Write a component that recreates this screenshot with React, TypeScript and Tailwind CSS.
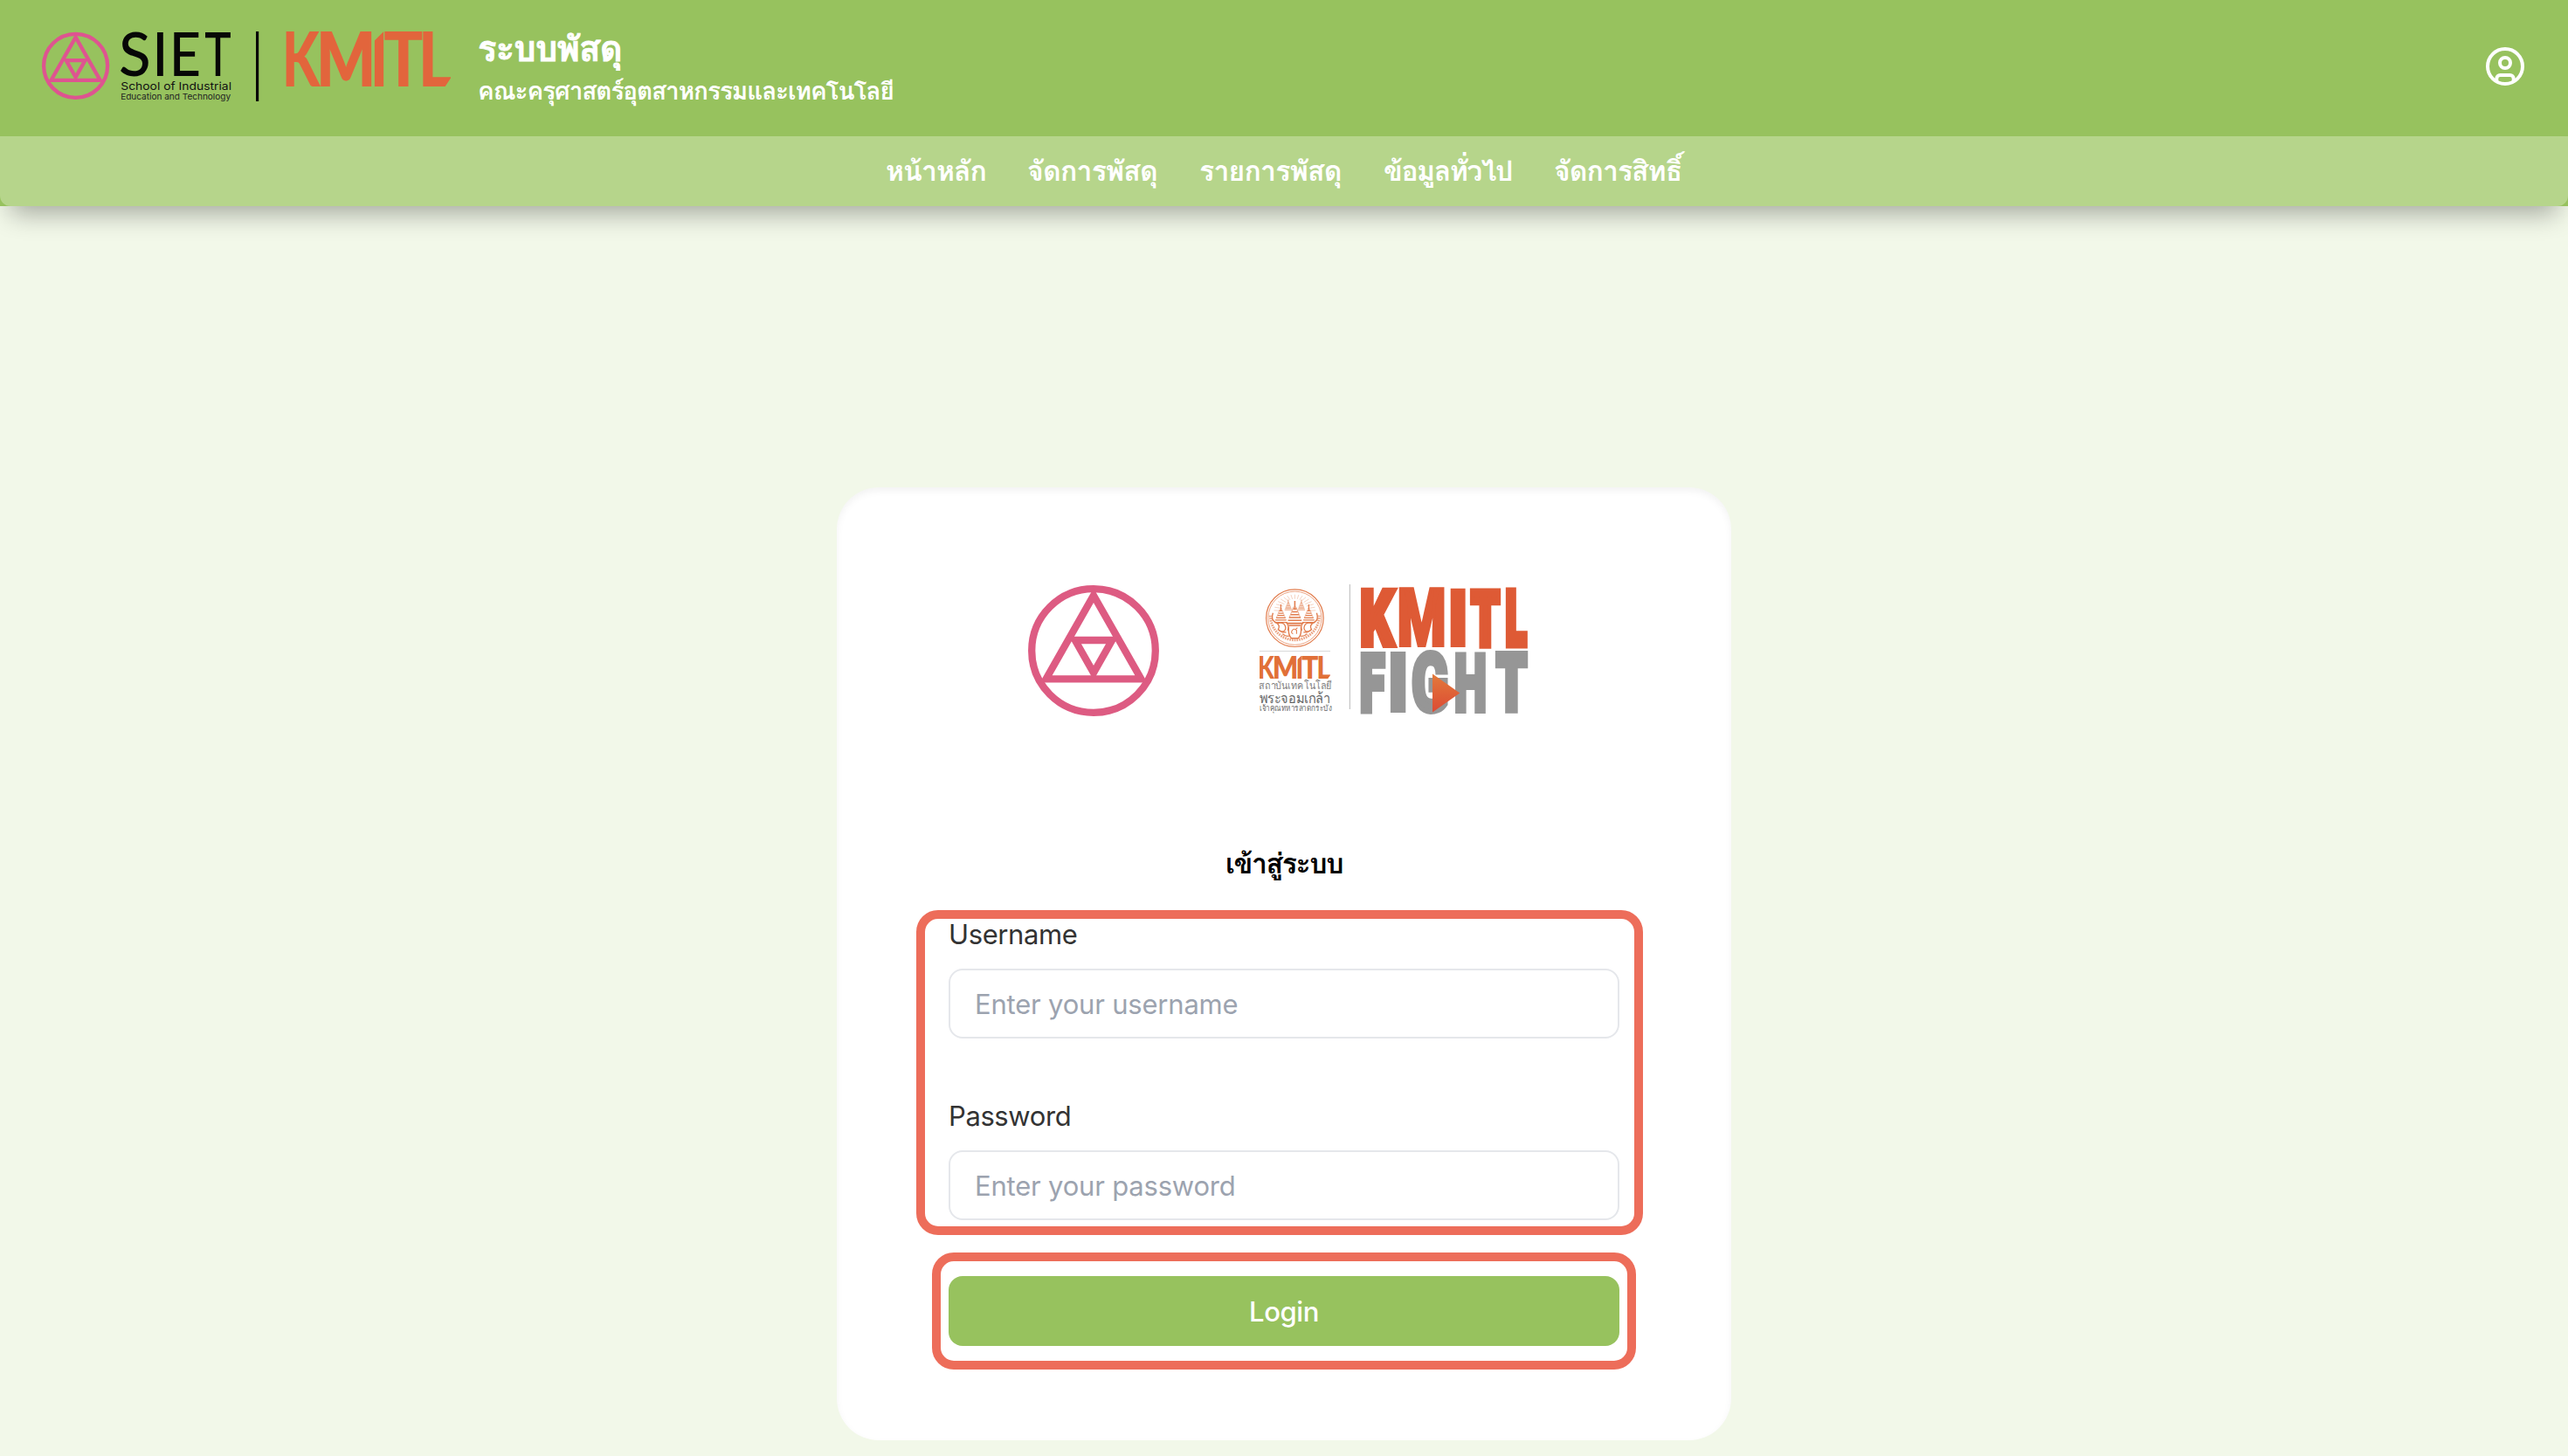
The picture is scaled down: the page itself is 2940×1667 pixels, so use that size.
import { useMemo } from "react";

type FitProps = {
  text: string;
  x: number;
  y: number;
  w: number;
  h: number;
  fill: string;
  family?: string;
  weight?: number;
  grow?: number;
};

/* Sets a run of text so that its ink fills the given box. */
function Fit({ text, x, y, w, h, fill, family = "Lato", weight = 400, grow = 0 }: FitProps) {
  const m = useMemo(() => {
    const ctx = document.createElement("canvas").getContext("2d")!;
    ctx.font = `${weight} 200px ${family}, sans-serif`;
    const t = ctx.measureText(text);
    return {
      l: t.actualBoundingBoxLeft / 2,
      r: t.actualBoundingBoxRight / 2,
      a: t.actualBoundingBoxAscent / 2,
      d: t.actualBoundingBoxDescent / 2,
    };
  }, [text, family, weight]);
  const sx = (w - grow) / (m.l + m.r);
  const sy = (h - grow) / (m.a + m.d);
  return (
    <text
      transform={`translate(${x + grow / 2 + m.l * sx} ${y + grow / 2 + m.a * sy}) scale(${sx} ${sy})`}
      fontFamily={`${family}, sans-serif`}
      fontSize={100}
      fontWeight={weight}
      fill={fill}
      stroke={grow ? fill : "none"}
      strokeWidth={grow}
      vectorEffect="non-scaling-stroke"
    >
      {text}
    </text>
  );
}

function Triangles({ color }: { color: string }) {
  return (
    <g fill="none" stroke={color} strokeWidth={8.3} strokeMiterlimit={10}>
      <circle r={70.8} />
      <path d="M0 -63.3 54.4 32.3H-54.4Z" />
      <path d="M-21.2 -12H21.2L0 25.3Z" />
    </g>
  );
}

function KmitlMark({ id, color }: { id: string; color: string }) {
  return (
    <g clipPath={`url(#${id})`}>
      <clipPath id={id}>
        <path d="M0 0H100V12L112 0H189V53L182 63.5H0Z" />
      </clipPath>
      <Fit text="K" x={0} y={0} w={40} h={63.3} weight={900} fill={color} />
      <Fit text="M" x={40} y={0} w={58} h={63.3} weight={800} fill={color} />
      <Fit text="I" x={101.5} y={0} w={10.5} h={63.3} weight={900} fill={color} />
      <Fit text="T" x={113} y={0} w={43} h={63.3} weight={900} fill={color} />
      <Fit text="L" x={157} y={0} w={32} h={63.3} weight={900} fill={color} />
    </g>
  );
}

function SietLogo() {
  return (
    <svg width={469} height={80} viewBox="48 36 469 80" className="block overflow-visible">
      <g transform="translate(86.6 75.3) scale(0.516)">
        <Triangles color="#de5490" />
      </g>
      <Fit text="S" x={138} y={36} w={32} h={51.5} weight={500} fill="#070707" />
      <Fit text="I" x={179.6} y={36.8} w={7.4} h={49.8} weight={500} fill="#070707" />
      <Fit text="E" x={199} y={36.8} w={28.3} h={49.8} weight={500} fill="#070707" />
      <Fit text="T" x={235} y={36.8} w={29} h={49.8} weight={500} fill="#070707" />
      <Fit text="School of Industrial" x={139} y={94} w={125} h={9.2} family="Inter" weight={400} fill="#111" />
      <Fit text="Education and Technology" x={139} y={107} w={125} h={9} family="Inter" weight={400} fill="#222" />
      <rect x={293} y={36} width={3.2} height={80} fill="#070707" />
      <g transform="translate(327.3 36)">
        <KmitlMark id="mark-header" color="#e2653c" />
      </g>
    </svg>
  );
}

function Pagoda({ x, y, s }: { x: number; y: number; s: number }) {
  return (
    <g transform={`translate(${x} ${y}) scale(${s})`}>
      <path d="M0 -12V-5M-1.5 -5H1.5M-2.5 -2.5H2.5M-3.5 0H3.5M-5 2.5H5M-6 5H6M-7 7.5H7" strokeWidth={1.2} />
      <path d="M-1 -7 -5 3M1 -7 5 3" strokeWidth={0.5} />
    </g>
  );
}

function Emblem() {
  const rays = Array.from({ length: 17 }, (_, i) => Math.PI + (Math.PI * (i + 0.5)) / 17);
  return (
    <g fill="none" stroke="#e27d4e">
      <circle r={32.8} strokeWidth={1.2} />
      <circle r={30.6} strokeWidth={0.7} />
      <path d="M-28 -3A28 28 0 1 0 28 -3" strokeWidth={3} strokeDasharray="1.7 1" strokeOpacity={0.7} />
      {rays.map((a) => (
        <path
          key={a}
          d={`M${Math.cos(a) * 15} ${Math.sin(a) * 15 - 7}L${Math.cos(a) * 24} ${Math.sin(a) * 20 - 7}`}
          strokeWidth={0.5}
          strokeOpacity={0.7}
        />
      ))}
      <Pagoda x={-16} y={-3} s={1.05} />
      <Pagoda x={16} y={-3} s={1.05} />
      <Pagoda x={0} y={-4} s={1.3} />
      <Pagoda x={-7.5} y={-14} s={0.6} />
      <Pagoda x={7.5} y={-14} s={0.6} />
      <path d="M-25 -6q-3 8 3 11t3 8q4 4 9 3M25 -6q3 8-3 11t-3 8q-4 4-9 3" strokeWidth={1.4} />
      <path d="M-20 6q7-2 9 3t-4 7M20 6q-7-2-9 3t4 7M-10 5q4 3 2 9M10 5q-4 3-2 9M-14 18q5 4 8 2M14 18q-5 4-8 2" strokeWidth={1.3} />
      <path d="M-8 6H8M-7 8.5H7M-7 10q-1 9 3 13H4q4-4 3-13" strokeWidth={1.4} />
      <path d="M-2 18q-3-1-1-4t5 0v4M3 11l-2 2" strokeWidth={1.1} />
    </g>
  );
}

function FightLogo() {
  const o = "#de5a35";
  const g = "#969696";
  const f = "Roboto";
  return (
    <svg width={310} height={150} viewBox="1441 668 310 150" className="block overflow-visible">
      <defs>
        <linearGradient id="play" x1="0" y1="0" x2="0" y2="1">
          <stop offset="0" stopColor="#e37a3a" />
          <stop offset="1" stopColor="#dc4a34" />
        </linearGradient>
      </defs>
      <g transform="translate(1482.4 707.7)">
        <Emblem />
      </g>
      <rect x={1442} y={745} width={81} height={1} fill="#d9d9d9" />
      <g transform="translate(1442 750.4) scale(0.43 0.42)">
        <KmitlMark id="mark-card" color="#e17038" />
      </g>
      <Fit text="สถาบันเทคโนโลยี" x={1442} y={778.5} w={81.5} h={11} fill="#808080" />
      <Fit text="พระจอมเกล้า" x={1442} y={791.5} w={81.5} h={13.5} weight={500} fill="#666" />
      <Fit text="เจ้าคุณทหารลาดกระบัง" x={1442.5} y={806.5} w={81} h={10.5} weight={500} fill="#6c6c6c" />
      <rect x={1544.8} y={669} width={1.2} height={143} fill="#c4c4c4" />
      <Fit text="K" x={1557.3} y={673} w={42} h={68} family={f} weight={900} fill={o} grow={5} />
      <Fit text="M" x={1601.3} y={673} w={52.8} h={68} family={f} weight={900} fill={o} grow={3.5} />
      <Fit text="I" x={1660.7} y={673} w={17.3} h={68} family={f} weight={900} fill={o} />
      <Fit text="T" x={1681.7} y={673} w={37.5} h={68} family={f} weight={900} fill={o} grow={7} />
      <Fit text="L" x={1722.5} y={673} w={27.7} h={68} family={f} weight={900} fill={o} grow={7} />
      <Fit text="F" x={1556.5} y={746} w={30.8} h={70} family={f} weight={900} fill={g} grow={6.5} />
      <Fit text="I" x={1591.8} y={746} w={17.8} h={70} family={f} weight={900} fill={g} />
      <Fit text="G" x={1616} y={744.5} w={42.3} h={72.5} family={f} weight={900} fill={g} grow={5} />
      <Fit text="H" x={1665} y={746} w={36.5} h={70} family={f} weight={900} fill={g} grow={5} />
      <Fit text="T" x={1710.7} y={746} w={39.5} h={70} family={f} weight={900} fill={g} grow={7} />
      <path d="M1640 771.5 1671.3 793.5 1640 815.5Z" fill="url(#play)" />
    </svg>
  );
}

function UserIcon() {
  return (
    <svg width={48} height={48} viewBox="0 0 48 48" fill="none" stroke="#fff" strokeWidth={4}>
      <circle cx={24} cy={24} r={20} />
      <circle cx={24} cy={20} r={6} />
      <path d="M14.3 41V38a4 4 0 0 1 4-4H29.7a4 4 0 0 1 4 4V41" />
    </svg>
  );
}

const NAV = [
  { label: "หน้าหลัก", box: "w-[114px] tracking-[-1px]" },
  { label: "จัดการพัสดุ", box: "w-[149px] tracking-[-0.8px]" },
  { label: "รายการพัสดุ", box: "w-[163px] tracking-[-0.8px]" },
  { label: "ข้อมูลทั่วไป", box: "w-[147px] tracking-[-1.5px]" },
  { label: "จัดการสิทธิ์", box: "w-[147px] tracking-[-1px]" },
];

function Field({ label, placeholder, type }: { label: string; placeholder: string; type: string }) {
  return (
    <div className="flex flex-col">
      <label className="mb-[17px] h-[44px] text-[31px] leading-[44px] tracking-[-0.4px] text-[#333]">{label}</label>
      <input
        type={type}
        placeholder={placeholder}
        className="h-20 w-full rounded-2xl border-2 border-[#e5e7eb] bg-white px-[28px] text-[31px] tracking-[-0.2px] placeholder:text-[#9ca3af]"
      />
    </div>
  );
}

export default function App() {
  return (
    <div className="flex h-[1667px] w-[2940px] flex-col overflow-hidden bg-[#f2f8e9] font-['Inter','Loma','Noto_Sans_Thai',sans-serif]">
      <header className="bg-[#97c25e] shadow-[0_20px_28px_-12px_rgba(0,0,0,0.33)]">
        <div className="flex h-[156px] items-start justify-between pl-12 pr-12">
          <div className="flex">
            <div className="pt-9">
              <SietLogo />
            </div>
            <div className="ml-[30px] flex flex-col pt-7 font-bold whitespace-nowrap text-white">
              <span className="h-14 text-[40px] leading-[56px] tracking-[-0.8px] [-webkit-text-stroke:0.8px_#fff]">ระบบพัสดุ</span>
              <span className="h-10 text-[28px] leading-[40px] tracking-[-1.1px]">คณะครุศาสตร์อุตสาหกรรมและเทคโนโลยี</span>
            </div>
          </div>
          <button className="mt-[52px]">
            <UserIcon />
          </button>
        </div>
        <nav className="flex h-20 items-center justify-center gap-12 rounded-b-xl bg-[#b6d58b] text-[32px] font-bold whitespace-nowrap text-white">
          {NAV.map((n) => (
            <a key={n.label} className={n.box}>
              {n.label}
            </a>
          ))}
        </nav>
      </header>
      <main className="flex flex-1 flex-col items-center pt-[322px]">
        <section className="flex h-[1091px] w-[1024px] flex-col items-center rounded-[48px] bg-white pt-[110px] shadow-[inset_0_4px_8px_rgba(0,0,0,0.05)]">
          <div className="flex h-[152px] gap-[112px] pr-[14px]">
            <svg width={154} height={154} viewBox="-77 -77 154 154">
              <Triangles color="#dd5b82" />
            </svg>
            <FightLogo />
          </div>
          <h1 className="mt-[145px] h-[47px] text-[32px] leading-[48px] font-bold tracking-[-1.4px] text-black">เข้าสู่ระบบ</h1>
          <form className="flex w-[768px] flex-col pt-[36px]">
            <div className="relative flex flex-col gap-[67px]">
              <Field label="Username" placeholder="Enter your username" type="text" />
              <Field label="Password" placeholder="Enter your password" type="password" />
              <div className="pointer-events-none absolute -top-[6px] -right-[27px] -bottom-[17px] -left-[37px] rounded-[25px] border-10 border-[#ed6d5a]" />
            </div>
            <div className="relative mt-16">
              <button className="h-20 w-full rounded-2xl bg-[#97c25e] pt-[2px] text-[31px] font-medium tracking-[-0.4px] text-white">
                Login
              </button>
              <div className="pointer-events-none absolute -top-[27px] -right-[19px] -bottom-[27px] -left-[19px] rounded-[25px] border-10 border-[#ed6d5a]" />
            </div>
          </form>
        </section>
      </main>
    </div>
  );
}
